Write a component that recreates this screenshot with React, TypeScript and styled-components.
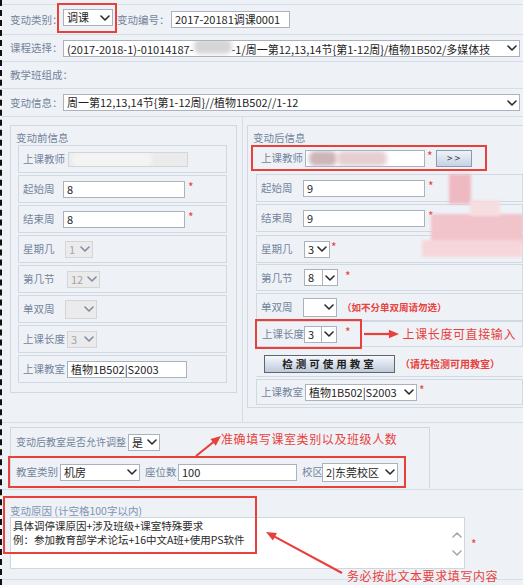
import React from 'react';
import styled, { createGlobalStyle } from 'styled-components';

const C = {
  bg: '#eef2f7',
  line: '#d5dde7',
  box: '#d0d8e2',
  label: '#74849b',
  red: '#e8413c',
};

const GlobalStyle = createGlobalStyle`
  html, body { margin: 0; padding: 0; background: ${C.bg}; }
  body { font-family: "Noto Sans CJK SC", "Noto Sans", sans-serif; }
  * { box-sizing: border-box; }
`;

const Page = styled.div`
  position: relative;
  width: 523px;
  height: 585px;
  overflow: hidden;
  background: ${C.bg};
  border-left: 2px dashed #111;
`;

const TopStrip = styled.div`
  height: 5px;
  border-bottom: 1px solid ${C.line};
`;

const Row = styled.div<{ $h: number }>`
  display: flex;
  align-items: center;
  height: ${p => p.$h}px;
  padding-left: 8px;
  border-bottom: 1px solid ${C.line};
`;

const Label = styled.span<{ $w?: number; $size?: number }>`
  flex: none;
  width: ${p => (p.$w ? `${p.$w}px` : 'auto')};
  font-size: ${p => p.$size ?? 10.5}px;
  line-height: 14px;
  color: ${C.label};
  white-space: nowrap;
`;

const Field = styled.div<{ $w: number; $disabled?: boolean; $h?: number }>`
  flex: none;
  position: relative;
  display: flex;
  align-items: center;
  width: ${p => p.$w}px;
  height: ${p => p.$h ?? 17}px;
  padding-left: 3px;
  background: ${p => (p.$disabled ? '#ebebeb' : '#fff')};
  border: 1px solid ${p => (p.$disabled ? '#d2d6db' : '#a9b2bd')};
  color: ${p => (p.$disabled ? '#a5a5a5' : '#1e1e1e')};
  font-size: 11px;
  line-height: 15px;
  white-space: nowrap;
  overflow: hidden;
`;

const FieldText = styled.span`
  flex: 1;
  overflow: hidden;
`;

const ChevronBox = styled.span<{ $split?: boolean }>`
  flex: none;
  display: flex;
  align-items: center;
  justify-content: center;
  width: 15px;
  height: 100%;
  border-left: ${p => (p.$split ? '1px solid #a9b2bd' : 'none')};
`;

const Star = styled.span<{ $gap?: number }>`
  flex: none;
  margin-left: ${p => p.$gap ?? 3}px;
  color: ${C.red};
  font-size: 12px;
  line-height: 12px;
  align-self: center;
  margin-top: -4px;
`;

const Blob = styled.span<{ $w: number; $color: string }>`
  flex: none;
  display: inline-block;
  width: ${p => p.$w}px;
  height: 15px;
  background: ${p => p.$color};
  filter: blur(2px);
  border-radius: 6px;
`;

const RedFrame = styled.div<{ $w?: number; $h: number; $ml?: number }>`
  flex: none;
  display: flex;
  align-items: center;
  width: ${p => (p.$w ? `${p.$w}px` : 'auto')};
  height: ${p => p.$h}px;
  margin-left: ${p => p.$ml ?? 0}px;
  border: 2px solid ${C.red};
`;

const MidSection = styled.div`
  display: flex;
  height: 306px;
  border-bottom: 1px solid ${C.line};
`;

const LeftCol = styled.div`
  width: 241px;
  padding: 8px 0 0 8px;
  border-right: 1px solid ${C.line};
`;

const RightCol = styled.div`
  flex: 1;
  padding: 8px 0 0 4px;
`;

const Panel = styled.div<{ $w?: number; $h: number; $open?: boolean }>`
  width: ${p => (p.$w ? `${p.$w}px` : 'auto')};
  height: ${p => p.$h}px;
  border: 1px solid ${C.box};
  border-right: ${p => (p.$open ? 'none' : `1px solid ${C.box}`)};
  padding: 0 ${p => (p.$open ? 0 : 9)}px 0 ${p => (p.$open ? 8 : 7)}px;
`;

const PanelTitle = styled.div<{ $ml: number }>`
  height: 19px;
  display: flex;
  align-items: flex-end;
  margin-left: ${p => p.$ml}px;
  font-size: 10.5px;
  line-height: 14px;
  color: ${C.label};
`;

const SubRow = styled.div<{ $h?: number; $mb?: number }>`
  display: flex;
  align-items: center;
  height: ${p => p.$h ?? 28}px;
  margin-bottom: ${p => p.$mb ?? 2}px;
  padding-left: 4px;
  border: 1px solid ${C.box};
`;

const Hint = styled.span<{ $size?: number; $ml?: number }>`
  flex: none;
  margin-left: ${p => p.$ml ?? 5}px;
  color: ${C.red};
  font-size: ${p => p.$size ?? 10}px;
  font-weight: 700;
  white-space: nowrap;
  line-height: 14px;
`;

const Note = styled.span`
  color: ${C.red};
  font-size: 12px;
  letter-spacing: 0.6px;
  white-space: nowrap;
  line-height: 16px;
`;

const GhostButton = styled.button<{ $w: number }>`
  flex: none;
  width: ${p => p.$w}px;
  height: 17px;
  padding: 0;
  border: 1px solid #8b9bb0;
  background: linear-gradient(#eef3f9, #c6d3e3);
  color: #333;
  font-family: inherit;
  font-size: 10px;
  line-height: 14px;
`;

const CheckButton = styled.button`
  flex: none;
  width: 131px;
  height: 18px;
  padding: 0;
  border: 1px solid #5d6570;
  background: linear-gradient(#f7f9fc, #d3dce8 60%, #bfcad8);
  color: #222;
  font-family: inherit;
  font-size: 10.5px;
  font-weight: 700;
  letter-spacing: 3px;
  line-height: 14px;
`;

const BottomSection = styled.div`
  height: 67px;
  padding: 4px 0 0 8px;
  border-bottom: 1px solid ${C.line};
`;

const InnerBox = styled.div`
  width: 420px;
  border: 1px solid ${C.box};
  border-bottom: none;
`;

const InnerRow = styled.div`
  display: flex;
  align-items: center;
  height: 28px;
  padding-left: 5px;
`;

const ReasonSection = styled.div`
  height: 90px;
  padding-left: 8px;
  border-bottom: 1px solid ${C.line};
`;

const ReasonLabel = styled.div`
  height: 27px;
  padding-top: 15px;
  font-size: 10.5px;
  line-height: 12px;
  color: #8094b0;
  white-space: nowrap;
`;

const ReasonLine = styled.div`
  display: flex;
  align-items: flex-start;
`;

const TextArea = styled.div`
  position: relative;
  width: 455px;
  height: 52px;
  padding: 1px 0 0 2px;
  background: #fff;
  border: 1px solid #cfd6df;
  font-size: 10.5px;
  line-height: 14px;
  color: #2a2a2a;
`;

const ScrollArrows = styled.div`
  position: absolute;
  right: 2px;
  top: 14px;
  display: flex;
  flex-direction: column;
  gap: 12px;
`;

const Overlay = styled.div`
  position: absolute;
  pointer-events: none;
`;

const Mosaic = styled.div`
  position: absolute;
  filter: blur(1.5px);
`;

function Chevron({ color = '#2b2b2b', up = false }: { color?: string; up?: boolean }) {
  return (
    <svg width="10" height="6" viewBox="0 0 10 6">
      <polyline
        points={up ? '1,5 5,1 9,5' : '1,1 5,5 9,1'}
        fill="none"
        stroke={color}
        strokeWidth="1.6"
        strokeLinecap="round"
        strokeLinejoin="round"
      />
    </svg>
  );
}

type SelectProps = { w: number; value?: React.ReactNode; disabled?: boolean; split?: boolean; h?: number };

function Select({ w, value, disabled, split, h }: SelectProps) {
  return (
    <Field $w={w} $disabled={disabled} $h={h}>
      <FieldText>{value}</FieldText>
      <ChevronBox $split={split}>
        <Chevron color={disabled ? '#7d8da3' : '#2b2b2b'} />
      </ChevronBox>
    </Field>
  );
}

function Arrow({ w, h, x1, y1, x2, y2 }: { w: number; h: number; x1: number; y1: number; x2: number; y2: number }) {
  const a = Math.atan2(y2 - y1, x2 - x1);
  const len = 11;
  const spread = 0.4;
  const p1 = [x2 - len * Math.cos(a - spread), y2 - len * Math.sin(a - spread)];
  const p2 = [x2 - len * Math.cos(a + spread), y2 - len * Math.sin(a + spread)];
  return (
    <svg width={w} height={h} viewBox={`0 0 ${w} ${h}`}>
      <line x1={x1} y1={y1} x2={x2 - 6 * Math.cos(a)} y2={y2 - 6 * Math.sin(a)} stroke={C.red} strokeWidth="2.2" />
      <polygon points={`${x2},${y2} ${p1[0]},${p1[1]} ${p2[0]},${p2[1]}`} fill={C.red} />
    </svg>
  );
}

export default function App() {
  return (
    <>
      <GlobalStyle />
      <Page>
        <TopStrip />
        <Row $h={30}>
          <Label $w={47}>变动类别：</Label>
          <RedFrame $h={30} style={{ padding: '0 2px 0 4px', marginTop: -4 }}>
            <Select w={50} value="调课" />
          </RedFrame>
          <Label $w={54}>变动编号：</Label>
          <Field $w={119}>2017-20181调课0001</Field>
        </Row>
        <Row $h={27}>
          <Label $w={53}>课程选择：</Label>
          <Select
            w={457}
            value={
              <>
                (2017-2018-1)-01014187-
                <Blob $w={38} $color="#d6d6d6" />
                -1/周一第12,13,14节{'{'}第1-12周{'}'}/植物1B502/多媒体技
              </>
            }
          />
        </Row>
        <Row $h={27}>
          <Label>教学班组成：</Label>
        </Row>
        <Row $h={28}>
          <Label $w={53}>变动信息：</Label>
          <Select w={457} value={<>周一第12,13,14节{'{'}第1-12周{'}'}//植物1B502//1-12</>} />
        </Row>

        <MidSection>
          <LeftCol>
            <Panel $w={227} $h={268}>
              <PanelTitle $ml={-2}>变动前信息</PanelTitle>
              <SubRow>
                <Label $w={45}>上课教师</Label>
                <Field $w={120} $disabled $h={15}>
                  <Blob $w={80} $color="#f4f4f4" />
                </Field>
              </SubRow>
              <SubRow>
                <Label $w={40}>起始周</Label>
                <Field $w={122}>8</Field>
                <Star>*</Star>
              </SubRow>
              <SubRow>
                <Label $w={40}>结束周</Label>
                <Field $w={122}>8</Field>
                <Star>*</Star>
              </SubRow>
              <SubRow>
                <Label $w={42}>星期几</Label>
                <Select w={28} value="1" disabled />
              </SubRow>
              <SubRow>
                <Label $w={44}>第几节</Label>
                <Select w={33} value="12" disabled />
              </SubRow>
              <SubRow>
                <Label $w={42}>单双周</Label>
                <Select w={32} disabled h={19} />
              </SubRow>
              <SubRow>
                <Label $w={44}>上课长度</Label>
                <Select w={30} value="3" disabled />
              </SubRow>
              <SubRow>
                <Label $w={44}>上课教室</Label>
                <Field $w={120}>植物1B502|S2003</Field>
              </SubRow>
            </Panel>
          </LeftCol>

          <RightCol>
            <Panel $h={283} $open>
              <PanelTitle $ml={-3}>变动后信息</PanelTitle>
              <RedFrame $w={236} $h={26} $ml={-5} style={{ marginBottom: 3, paddingLeft: 8 }}>
                <Label $w={44}>上课教师</Label>
                <Field $w={120}>
                  <Blob $w={28} $color="#cdb5b9" />
                  <Blob $w={50} $color="#e6cfd3" />
                </Field>
                <Star $gap={2}>*</Star>
                <span style={{ width: 3 }} />
                <GhostButton $w={36}>&gt; &gt;</GhostButton>
              </RedFrame>
              <SubRow>
                <Label $w={42}>起始周</Label>
                <Field $w={122}>9</Field>
                <Star>*</Star>
              </SubRow>
              <SubRow $mb={3}>
                <Label $w={42}>结束周</Label>
                <Field $w={122}>9</Field>
                <Star>*</Star>
              </SubRow>
              <SubRow $mb={1}>
                <Label $w={43}>星期几</Label>
                <Select w={26} value="3" />
                <Star $gap={1}>*</Star>
              </SubRow>
              <SubRow $h={27}>
                <Label $w={43}>第几节</Label>
                <Select w={34} value="8" split />
                <Star $gap={7}>*</Star>
              </SubRow>
              <SubRow $mb={0}>
                <Label $w={42}>单双周</Label>
                <Select w={34} h={19} />
                <Hint $size={9.5}>（如不分单双周请勿选）</Hint>
              </SubRow>
              <SubRow $h={26} $mb={3} style={{ paddingLeft: 0 }}>
                <RedFrame $h={30} $ml={-2} style={{ paddingLeft: 5, paddingRight: 9 }}>
                  <Label $w={42}>上课长度</Label>
                  <Select w={33} value="3" split />
                  <Star $gap={8}>*</Star>
                </RedFrame>
                <Arrow w={38} h={12} x1={2} y1={6} x2={37} y2={6} />
                <Note style={{ marginLeft: 3 }}>上课长度可直接输入</Note>
              </SubRow>
              <SubRow $h={27} style={{ paddingLeft: 7, borderColor: 'transparent', borderBottomColor: C.box }}>
                <CheckButton>检测可使用教室</CheckButton>
                <Hint $ml={5}>（请先检测可用教室）</Hint>
              </SubRow>
              <SubRow $h={26} $mb={0}>
                <Label $w={44}>上课教室</Label>
                <Select w={112} value="植物1B502|S2003" />
                <Star $gap={2}>*</Star>
              </SubRow>
            </Panel>
          </RightCol>
        </MidSection>

        <BottomSection>
          <InnerBox>
            <InnerRow>
              <Label $w={112} $size={10}>变动后教室是否允许调整</Label>
              <Select w={32} value="是" />
            </InnerRow>
            <RedFrame $w={398} $h={32} $ml={-3} style={{ paddingLeft: 6 }}>
              <Label $w={44}>教室类别</Label>
              <Select w={80} value="机房" />
              <Label $w={33} style={{ marginLeft: 5 }}>座位数</Label>
              <Field $w={119}>100</Field>
              <Label $w={20} style={{ marginLeft: 5 }}>校区</Label>
              <Select w={76} value="2|东莞校区" h={19} />
            </RedFrame>
          </InnerBox>
        </BottomSection>

        <ReasonSection>
          <ReasonLabel>变动原因 (计空格100字以内)</ReasonLabel>
          <ReasonLine>
            <TextArea>
              <div>具体调停课原因+涉及班级+课室特殊要求</div>
              <div>例：参加教育部学术论坛+16中文A班+使用PS软件</div>
              <ScrollArrows>
                <Chevron color="#a8a8a8" up />
                <Chevron color="#a8a8a8" />
              </ScrollArrows>
            </TextArea>
            <Star $gap={6} style={{ marginTop: 2 }}>*</Star>
          </ReasonLine>
        </ReasonSection>

        {/* annotations drawn over the form */}
        <Overlay style={{ left: 1, top: 496, width: 254, height: 58, border: `2px solid ${C.red}` }} />
        <Overlay style={{ left: 262, top: 528 }}>
          <Arrow w={80} h={48} x1={78} y1={45} x2={2} y2={4} />
        </Overlay>
        <Overlay style={{ left: 345, top: 562 }}>
          <Note>务必按此文本要求填写内容</Note>
        </Overlay>
        <Overlay style={{ left: 219, top: 425 }}>
          <Note>准确填写课室类别以及班级人数</Note>
        </Overlay>
        <Overlay style={{ left: 191, top: 434 }}>
          <Arrow w={30} h={24} x1={3} y1={22} x2={28} y2={2} />
        </Overlay>

        {/* pixelated privacy mosaic */}
        <Mosaic style={{ left: 447, top: 174, width: 22, height: 30, background: '#efb9c2' }} />
        <Mosaic style={{ left: 429, top: 214, width: 92, height: 30, background: '#f1c3ca' }} />
        <Mosaic style={{ left: 420, top: 240, width: 100, height: 17, background: '#f6d6da' }} />
        <Mosaic style={{ left: 468, top: 200, width: 30, height: 16, background: '#f6dde0' }} />
      </Page>
    </>
  );
}
